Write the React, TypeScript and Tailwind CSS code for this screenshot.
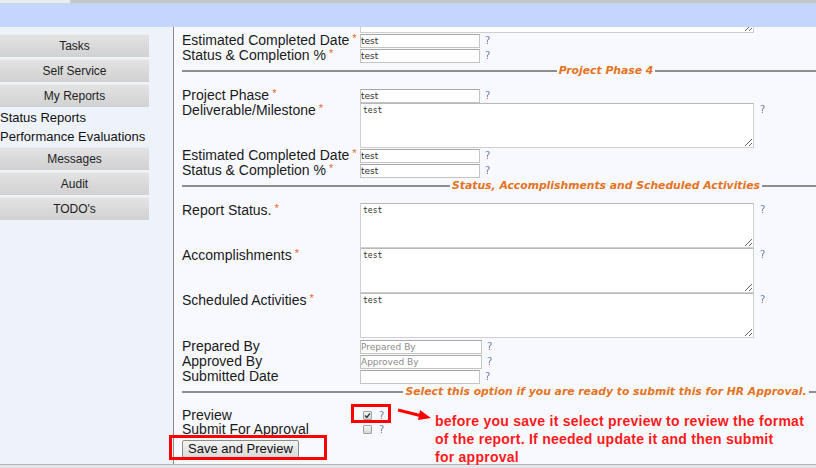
const Req = () => <span className="ml-[3px] text-[11px] leading-none text-[#e8652c] align-top">*</span>;

const Help = ({ className = '' }: { className?: string }) => (
  <span
    className={`font-['DejaVu_Sans',sans-serif] text-[10px] leading-none bg-linear-to-b from-[#6577a8] from-[62%] to-[#e8556a] to-[62%] bg-clip-text text-transparent ${className}`}
  >
    ?
  </span>
);

const Label = ({ text, req = true }: { text: string; req?: boolean }) => (
  <div className="w-[178px] shrink-0 text-[14px] leading-[15px] text-[#1a1a1a] whitespace-nowrap">
    {text}
    {req && <Req />}
  </div>
);

const Field = ({ label, value, req = true, placeholder, wide = false }: { label: string; value?: string; req?: boolean; placeholder?: string; wide?: boolean }) => (
  <div className="flex items-center h-[15px]">
    <Label text={label} req={req} />
    <input
      readOnly
      value={value ?? ''}
      placeholder={placeholder}
      className={`${wide ? 'w-[122px]' : 'w-[120px]'} h-[14px] border border-[#c4c4c4] border-t-[#a8a8a8] bg-white p-0 text-[9px] leading-[12px] text-[#333] placeholder:text-[#8a8a8a] font-['DejaVu_Sans',sans-serif] outline-none`}
    />
    <Help className="ml-[5px]" />
  </div>
);

const Area = ({ label }: { label: string }) => (
  <div className="flex items-start h-[45px]">
    <Label text={label} />
    <textarea
      readOnly
      defaultValue="test"
      className="w-[394px] h-[45px] border border-[#cfcfcf] border-t-[#b8b8b8] bg-white px-[2px] py-[1px] text-[8px] leading-[11px] text-[#333] font-['DejaVu_Sans_Mono',monospace] outline-none"
    />
    <Help className="ml-[6px] mt-[2px]" />
  </div>
);

const Legend = ({ text, className = '' }: { text: string; className?: string }) => (
  <div className={`w-[848px] h-[16px] flex items-center ${className}`}>
    <div className="flex-1 h-[2px] bg-[#8e8e8e]" />
    <span className="px-[2px] text-[10.8px] font-bold italic text-[#e4731e] whitespace-nowrap font-['DejaVu_Sans',sans-serif]">
      {text}
    </span>
    <div className="flex-1 h-[2px] bg-[#8e8e8e]" />
  </div>
);

const SideButton = ({ text }: { text: string }) => (
  <div className="w-[149px] h-[23px] mb-[2px] flex items-center justify-center bg-linear-to-b from-[#e3e3e3] to-[#d1d1d1] border-t border-[#ececec] text-[12px] text-[#222]">
    {text}
  </div>
);

const Check = ({ checked }: { checked?: boolean }) => (
  <span className="ml-[3px] w-[9px] h-[9px] border border-[#a0a0a0] bg-linear-to-b from-[#f4f4f4] to-[#d8d8d8] rounded-[1px] flex items-center justify-center">
    {checked && (
      <svg width="7" height="7" viewBox="0 0 7 7">
        <path d="M1 3.6 L2.8 5.4 L6 1.4" fill="none" stroke="#333" strokeWidth="1.4" />
      </svg>
    )}
  </span>
);

export default function App() {
  return (
    <div className="relative w-[816px] h-[468px] overflow-hidden bg-[#f8f9fe] font-['Liberation_Sans',Arial,sans-serif]">
      {/* top nav, cut off */}
      <div className="flex h-[3px]">
        <div className="w-[70px] bg-[#ececec]" />
        <div className="flex-1 bg-[#c6c6c6]" />
      </div>
      <div className="h-[24px] bg-[#c4d6fb]" />

      <div className="flex h-[437px]">
        {/* Sidebar */}
        <aside className="w-[173px] shrink-0 bg-[#eef2fb] pt-[7px] flex flex-col">
          <SideButton text="Tasks" />
          <SideButton text="Self Service" />
          <SideButton text="My Reports" />
          <div className="text-[13px] leading-[19px] text-[#111] -mt-[1px] mb-[1px]">
            <div>Status Reports</div>
            <div>Performance Evaluations</div>
          </div>
          <SideButton text="Messages" />
          <SideButton text="Audit" />
          <SideButton text="TODO's" />
        </aside>

        {/* Form */}
        <main className="flex-1 border-l border-[#8a8a8a] pl-[8px] overflow-hidden">
          <div className="h-[6px] overflow-hidden flex flex-col justify-end pl-[178px]">
            <textarea readOnly className="w-[394px] h-[45px] shrink-0 border border-[#cfcfcf] bg-white outline-none" />
          </div>
          <Field label="Estimated Completed Date" value="test" />
          <Field label="Status & Completion %" value="test" />
          <Legend text="Project Phase 4" className="mb-[9px]" />

          <Field label="Project Phase" value="test" />
          <Area label="Deliverable/Milestone" />
          <Field label="Estimated Completed Date" value="test" />
          <Field label="Status & Completion %" value="test" />
          <Legend text="Status, Accomplishments and Scheduled Activities" className="mb-[9px]" />

          <Area label="Report Status." />
          <Area label="Accomplishments" />
          <Area label="Scheduled Activities" />
          <div className="h-[1px]" />
          <Field label="Prepared By" req={false} placeholder="Prepared By" wide />
          <Field label="Approved By" req={false} placeholder="Approved By" wide />
          <Field label="Submitted Date" req={false} />
          <Legend text="Select this option if you are ready to submit this for HR Approval." className="mb-[8px]" />

          <div className="flex items-center h-[15px]">
            <Label text="Preview" req={false} />
            <Check checked />
            <Help className="ml-[7px]" />
          </div>
          <div className="flex items-center h-[13px]">
            <Label text="Submit For Approval" req={false} />
            <Check />
            <Help className="ml-[7px]" />
          </div>
          <button className="mt-[2px] h-[18px] px-[5px] border border-[#8c8c8c] rounded-[2px] bg-linear-to-b from-[#f4f4f4] to-[#dadada] text-[13px] leading-[16px] text-[#111]">
            Save and Preview
          </button>
        </main>
      </div>
      <div className="h-[4px] border-t border-[#b4b4b4] bg-[#e4e6ec]" />

      {/* annotations */}
      <div className="absolute left-[351px] top-[404px] w-[40px] h-[19px] border-[3px] border-[#ff0000]" />
      <div className="absolute left-[169px] top-[435px] w-[158px] h-[25px] border-[3px] border-[#ff0000]" />
      <svg className="absolute left-[396px] top-[405px]" width="38" height="18" viewBox="0 0 38 18">
        <path d="M2 5 L26 11" stroke="#ff0000" strokeWidth="3" />
        <path d="M24 5 L35 13 L22 15 Z" fill="#ff0000" />
      </svg>
      <div className="absolute left-[435px] top-[412px] text-[14px] tracking-[0.25px] leading-[18px] font-bold text-[#ff1a1a] whitespace-nowrap">
        <div>before you save it select preview to review the format</div>
        <div>of the report. If needed update it and then submit</div>
        <div>for approval</div>
      </div>
    </div>
  );
}
